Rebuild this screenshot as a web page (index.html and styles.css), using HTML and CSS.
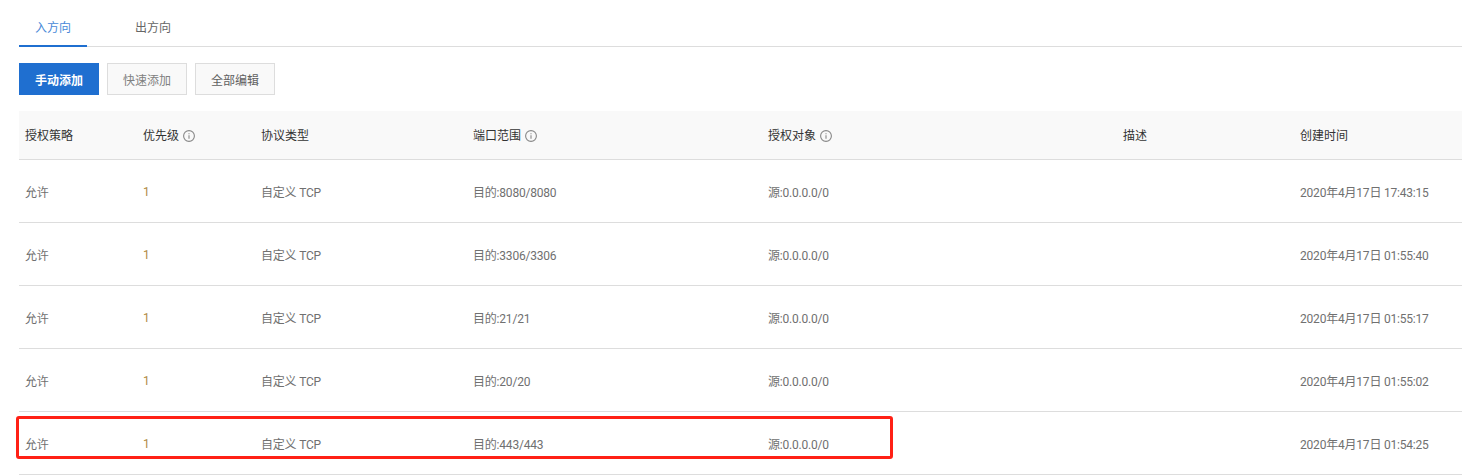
FILE: index.html
```html
<!DOCTYPE html>
<html lang="zh-CN">
<head>
    <meta charset="UTF-8">
    <title>安全组规则</title>
    <link rel="stylesheet" href="styles.css">
</head>
<body>
    <div class="page">
        <div class="tabs">
            <div class="tab active">入方向</div>
            <div class="tab">出方向</div>
        </div>

        <div class="toolbar">
            <button class="btn primary">手动添加</button>
            <button class="btn muted">快速添加</button>
            <button class="btn">全部编辑</button>
        </div>

        <table class="rules">
            <colgroup>
                <col class="c1"><col class="c2"><col class="c3"><col class="c4"><col class="c5"><col class="c6"><col>
            </colgroup>
            <thead>
                <tr>
                    <th>授权策略</th>
                    <th>优先级 <svg class="info" viewBox="0 0 12 12"><circle cx="6" cy="6" r="5.4"/><path d="M6 5.2v3.6M6 3.2v1"/></svg></th>
                    <th>协议类型</th>
                    <th>端口范围 <svg class="info" viewBox="0 0 12 12"><circle cx="6" cy="6" r="5.4"/><path d="M6 5.2v3.6M6 3.2v1"/></svg></th>
                    <th>授权对象 <svg class="info" viewBox="0 0 12 12"><circle cx="6" cy="6" r="5.4"/><path d="M6 5.2v3.6M6 3.2v1"/></svg></th>
                    <th>描述</th>
                    <th>创建时间</th>
                </tr>
            </thead>
            <tbody>
                <tr>
                    <td>允许</td><td class="num">1</td><td>自定义 TCP</td><td>目的:8080/8080</td><td>源:0.0.0.0/0</td><td></td><td>2020年4月17日 17:43:15</td>
                </tr>
                <tr>
                    <td>允许</td><td class="num">1</td><td>自定义 TCP</td><td>目的:3306/3306</td><td>源:0.0.0.0/0</td><td></td><td>2020年4月17日 01:55:40</td>
                </tr>
                <tr>
                    <td>允许</td><td class="num">1</td><td>自定义 TCP</td><td>目的:21/21</td><td>源:0.0.0.0/0</td><td></td><td>2020年4月17日 01:55:17</td>
                </tr>
                <tr>
                    <td>允许</td><td class="num">1</td><td>自定义 TCP</td><td>目的:20/20</td><td>源:0.0.0.0/0</td><td></td><td>2020年4月17日 01:55:02</td>
                </tr>
                <tr>
                    <td>允许</td><td class="num">1</td><td>自定义 TCP</td><td>目的:443/443</td><td>源:0.0.0.0/0</td><td></td><td>2020年4月17日 01:54:25</td>
                </tr>
            </tbody>
        </table>

        <div class="highlight"></div>
    </div>
</body>
</html>
```

FILE: styles.css
```css
* {
    box-sizing: border-box;
}
html, body {
    height: 475px;
    overflow: hidden;
}
body {
    margin: 0;
    background: #fff;
    color: #707070;
    font-family: Roboto, "Noto Sans CJK SC", sans-serif;
    font-size: 12px;
}
.page {
    position: relative;
    height: 475px;
    padding-left: 19px;
}
.tabs {
    display: flex;
    height: 47px;
    padding-top: 10px;
    border-bottom: 1px solid #ddd;
}
.tab {
    width: 68px;
    height: 37px;
    margin-right: 32px;
    line-height: 36px;
    text-align: center;
    color: #666;
}
.tab.active {
    color: #4a8ad8;
    border-bottom: 2px solid #1f6fd0;
}
.toolbar {
    display: flex;
    gap: 8px;
    margin-top: 16px;
}
.btn {
    width: 80px;
    height: 32px;
    padding: 0;
    background: #f9f9f9;
    border: 1px solid #ddd;
    color: #606060;
    font: inherit;
}
.btn.primary {
    background: #1f6fd0;
    border-color: #1f6fd0;
    color: #fff;
    font-weight: 700;
}
.btn.muted {
    color: #808080;
}
.rules {
    width: 1443px;
    margin-top: 16px;
    border-collapse: collapse;
    table-layout: fixed;
}
.c1, .c2 {
    width: 118px;
}
.c3 {
    width: 212px;
}
.c4 {
    width: 295px;
}
.c5 {
    width: 355px;
}
.c6 {
    width: 177px;
}
.rules th {
    height: 48px;
    padding: 0 6px;
    background: #f9f9f9;
    border-bottom: 1px solid #ddd;
    color: #333;
    font-weight: 400;
    text-align: left;
}
.rules td {
    height: 63px;
    padding: 1px 6px 0;
    border-bottom: 1px solid #ddd;
    letter-spacing: -0.2px;
}
.rules .num {
    padding-top: 3px;
    color: #b08a45;
}
.info {
    width: 12px;
    height: 12px;
    margin-left: 1px;
    vertical-align: -2px;
    fill: none;
    stroke: #888;
    stroke-width: 1.1;
}
.highlight {
    position: absolute;
    left: 16px;
    top: 416px;
    width: 877px;
    height: 43px;
    border: 3px solid #ff2015;
    border-radius: 3px;
}
```
